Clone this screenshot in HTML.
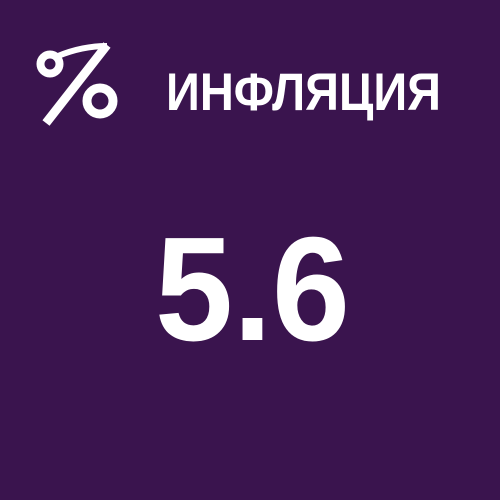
<!DOCTYPE html>
<html><head><meta charset="utf-8"><style>
html,body{margin:0;padding:0;background:#3a144e;width:500px;height:500px;overflow:hidden}
</style></head><body>
<svg width="500" height="500" viewBox="0 0 500 500" xmlns="http://www.w3.org/2000/svg">
<rect width="500" height="500" fill="#3a144e"/>
<g fill="none" stroke="#fff">
<circle cx="50" cy="64" r="9.5" stroke-width="8"/>
<path d="M58 56 C75 49 92 46 107 46" stroke-width="6"/>
<path d="M107 45 L46 123" stroke-width="9"/>
<circle cx="100" cy="101" r="13" stroke-width="9"/>
</g>
<text x="166" y="110" font-family="Liberation Sans, sans-serif" font-weight="bold" font-size="53" fill="#fff" textLength="275" lengthAdjust="spacingAndGlyphs">ИНФЛЯЦИЯ</text>
<text x="155" y="340" font-family="Liberation Sans, sans-serif" font-weight="bold" font-size="148" fill="#fff" textLength="195" lengthAdjust="spacingAndGlyphs">5.6</text>
</svg>
</body></html>
